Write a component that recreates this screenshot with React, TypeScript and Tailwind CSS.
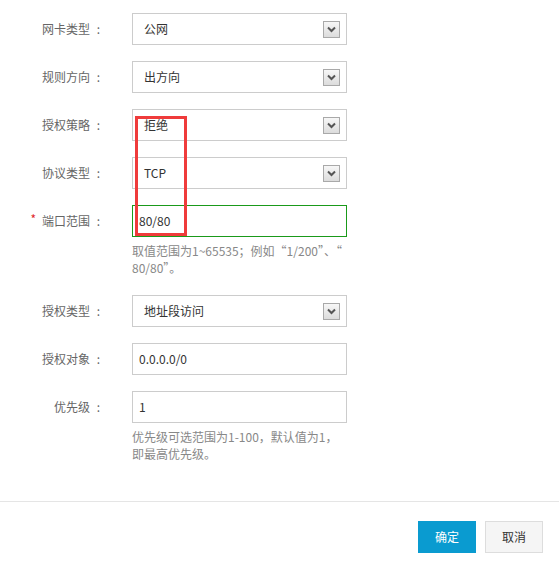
import React from "react";

const font = { fontFamily: '"Noto Sans CJK SC", "Noto Sans", sans-serif' };

function Chevron() {
  return (
    <div className="w-[17px] h-[17px] border border-[#a9a9a9] bg-gradient-to-b from-[#f7f7f7] to-[#dcdcdc] flex items-center justify-center">
      <svg width="9" height="7" viewBox="0 0 9 7">
        <path d="M1 1.5 L4.5 5 L8 1.5" stroke="#555" strokeWidth="2" fill="none" />
      </svg>
    </div>
  );
}

function Label({ text, required }: { text: string; required?: boolean }) {
  return (
    <div className="w-[100px] shrink-0 text-[12px] text-[#666] flex justify-end items-center">
      {required && <span className="text-[#e0262c] mr-[6px] text-[12px] relative top-[-2px]">*</span>}
      <span>{text}</span>
      <span className="w-[10px] text-right">:</span>
    </div>
  );
}

function SelectRow({ label, value }: { label: string; value: string }) {
  return (
    <div className="flex items-center h-[32px]">
      <Label text={label} />
      <div className="ml-[32px] w-[215px] h-[32px] border border-[#cccccc] bg-white flex items-center justify-between pl-[11px] pr-[6px]">
        <span className="text-[12px] text-[#333]">{value}</span>
        <Chevron />
      </div>
    </div>
  );
}

function InputRow({ label, value, required, green }: { label: string; value: string; required?: boolean; green?: boolean }) {
  return (
    <div className="flex items-center h-[32px]">
      <Label text={label} required={required} />
      <div
        className={
          "ml-[32px] w-[215px] h-[32px] border bg-white flex items-center pl-[6px] " +
          (green ? "border-[#1a9a1a]" : "border-[#cccccc]")
        }
      >
        <span className="text-[12px] text-[#333]">{value}</span>
      </div>
    </div>
  );
}

function Help({ children }: { children: React.ReactNode }) {
  return <div className="ml-[132px] w-[215px] mt-[5px] text-[12px] leading-[17px] text-[#888]">{children}</div>;
}

export default function App() {
  return (
    <div className="relative w-[559px] h-[564px] bg-white overflow-hidden" style={font}>
      <div className="pt-[13px] flex flex-col">
        <SelectRow label="网卡类型" value="公网" />
        <div className="h-[16px]" />
        <SelectRow label="规则方向" value="出方向" />
        <div className="h-[16px]" />
        <SelectRow label="授权策略" value="拒绝" />
        <div className="h-[16px]" />
        <SelectRow label="协议类型" value="TCP" />
        <div className="h-[16px]" />
        <InputRow label="端口范围" value="80/80" required green />
        <Help>
          取值范围为1~65535；例如“1/200”、“
          <br />
          80/80”。
        </Help>
        <div className="h-[19px]" />
        <SelectRow label="授权类型" value="地址段访问" />
        <div className="h-[16px]" />
        <InputRow label="授权对象" value="0.0.0.0/0" />
        <div className="h-[16px]" />
        <InputRow label="优先级" value="1" />
        <Help>
          优先级可选范围为1-100，默认值为1，
          <br />
          即最高优先级。
        </Help>
      </div>
      <div className="mt-[39px] border-t border-[#e5e5e5] pt-[19px] flex justify-end pr-[16px] gap-[9px]">
        <button className="w-[58px] h-[32px] bg-[#0a9bd0] text-white text-[12px]">确定</button>
        <button className="w-[58px] h-[32px] bg-[#f5f5f5] border border-[#dddddd] text-[#333] text-[12px]">取消</button>
      </div>
      <div className="absolute left-[135px] top-[116px] w-[52px] h-[120px] border-[3px] border-[#ef3b3b]" />
    </div>
  );
}
